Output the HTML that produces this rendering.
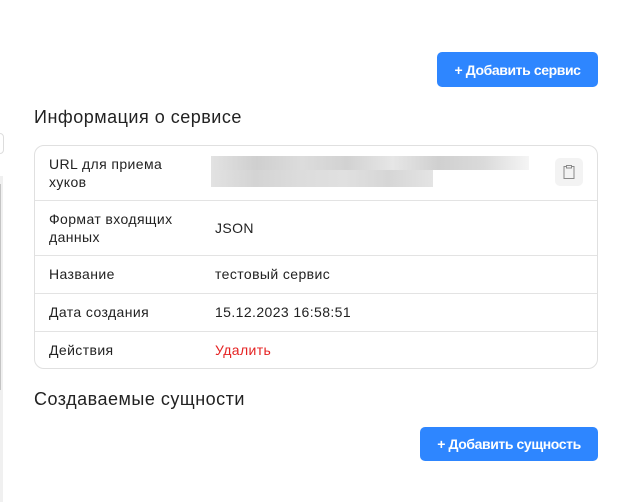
<!DOCTYPE html>
<html><head><meta charset="utf-8"><style>
body{margin:0;width:626px;height:502px;background:#fff;font-family:"Liberation Sans",sans-serif;position:relative;overflow:hidden;color:#222}
.abs{position:absolute}
.btn{position:absolute;background:#2e86ff;color:#fff;border-radius:5px;font-size:14px;font-weight:bold;letter-spacing:-0.4px;display:flex;align-items:center;justify-content:center}
h2{position:absolute;margin:0;font-weight:normal;font-size:18px;letter-spacing:0.5px;color:#222}
.tbl{position:absolute;left:34px;top:145px;width:562px;height:222px;border:1px solid #e0e0e0;border-radius:10px}
.row{position:absolute;left:0;right:0;border-top:1px solid #e3e3e3;font-size:14px;letter-spacing:0.4px}
.l{position:absolute;left:14px;line-height:18px}
.v{position:absolute;left:180px;line-height:18px}
</style></head><body>
<div class="abs" style="left:-6px;top:133px;width:8px;height:19px;border:1px solid #ddd;border-radius:4px"></div>
<div class="abs" style="left:0;top:176px;width:3px;height:326px;background:#f0f0f0"></div>
<div class="abs" style="left:0;top:184px;width:1px;height:206px;background:#c4c4c4"></div>
<div class="btn" style="left:437px;top:52px;width:161px;height:35px">+ Добавить сервис</div>
<h2 style="left:34px;top:107px">Информация о сервисе</h2>
<div class="tbl">
 <div class="row" style="top:0;height:54px;border-top:none">
  <div class="l" style="top:9px">URL для приема<br>хуков</div>
  <div class="abs" style="left:176px;top:10px;width:318px;height:14px;background:linear-gradient(90deg,#e2e2e2,#cfcfcf,#dcdcdc,#d2d2d2,#e6e6e6,#d0d0d0,#dadada,#f5f5f5)"></div>
  <div class="abs" style="left:176px;top:24px;width:222px;height:17px;background:linear-gradient(90deg,#e2e2e2,#d4d4d4,#dcdcdc,#e0e0e0,#d6d6d6,#e4e4e4)"></div>
  <div class="abs" style="left:520px;top:12px;width:28px;height:28px;background:#f3f3f3;border-radius:5px">
   <svg width="28" height="28" viewBox="0 0 28 28"><path d="M11.5 8.5H9v12h10v-12h-2.5M11.5 7.5h5v2.5h-5z" fill="none" stroke="#8a8a8a" stroke-width="1"/></svg>
  </div>
 </div>
 <div class="row" style="top:54px;height:55px">
  <div class="l" style="top:9px">Формат входящих<br>данных</div>
  <div class="v" style="top:18px">JSON</div>
 </div>
 <div class="row" style="top:109px;height:38px"><div class="l" style="top:9px">Название</div><div class="v" style="top:9px">тестовый сервис</div></div>
 <div class="row" style="top:147px;height:38px"><div class="l" style="top:9px">Дата создания</div><div class="v" style="top:9px">15.12.2023 16:58:51</div></div>
 <div class="row" style="top:185px;height:37px"><div class="l" style="top:9px">Действия</div><div class="v" style="top:9px;color:#e52222">Удалить</div></div>
</div>
<h2 style="left:34px;top:389px">Создаваемые сущности</h2>
<div class="btn" style="left:420px;top:427px;width:178px;height:34px">+ Добавить сущность</div>
</body></html>
